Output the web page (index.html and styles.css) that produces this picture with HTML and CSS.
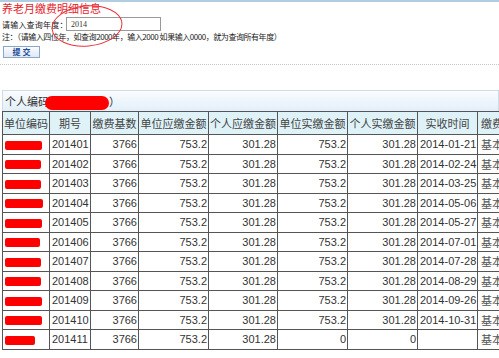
FILE: index.html
```html
<!DOCTYPE html>
<html lang="zh-CN">

<head>
    <meta charset="UTF-8">
    <title>养老月缴费明细信息</title>
    <link rel="stylesheet" href="styles.css">
</head>

<body>
    <div class="page">
        <div class="query">
            <h1 class="title">养老月缴费明细信息</h1>
            <div class="field">
                <label for="year">请输入查询年度：</label>
                <input type="text" id="year" value="2014">
            </div>
            <p class="note">注：（请输入四位年，如查询2000年，输入2000 如果输入0000，就为查询所有年度）</p>
            <button type="button" class="submit">提 交</button>
            <svg class="circle" width="80" height="48" viewBox="0 0 80 48">
                <ellipse cx="37" cy="22" rx="35" ry="20" fill="none" stroke="#e8333a" stroke-width="1" transform="rotate(-5 37 22)"/>
            </svg>
        </div>

        <div class="divider"></div>

        <div class="panel">
            <div class="panel-head">个人编码<span class="blot wide"></span>）</div>
            <table class="detail">
                <colgroup>
                    <col style="width:47px">
                    <col style="width:41px">
                    <col style="width:48px">
                    <col style="width:70px">
                    <col style="width:69px">
                    <col style="width:70px">
                    <col style="width:70px">
                    <col style="width:60px">
                    <col style="width:60px">
                </colgroup>
                <thead>
                    <tr>
                        <th>单位编码</th>
                        <th>期号</th>
                        <th>缴费基数</th>
                        <th>单位应缴金额</th>
                        <th>个人应缴金额</th>
                        <th>单位实缴金额</th>
                        <th>个人实缴金额</th>
                        <th>实收时间</th>
                        <th class="left">缴费类型</th>
                    </tr>
                </thead>
                <tbody id="rows"></tbody>
            </table>
        </div>
    </div>

    <script>
        const dates = ['2014-01-21', '2014-02-24', '2014-03-25', '2014-05-06', '2014-05-27',
            '2014-07-01', '2014-07-28', '2014-08-29', '2014-09-26', '2014-10-31', ''];
        const blots = [37, 36, 36, 38, 37, 35, 36, 36, 37, 37, 30];
        const tbody = document.getElementById('rows');

        dates.forEach((date, i) => {
            const last = i === dates.length - 1;
            const tr = document.createElement('tr');
            tr.innerHTML =
                '<td class="code"><span class="blot" style="width:' + blots[i] + 'px"></span></td>' +
                '<td>2014' + String(i + 1).padStart(2, '0') + '</td>' +
                '<td class="num">3766</td>' +
                '<td class="num">753.2</td>' +
                '<td class="num">301.28</td>' +
                '<td class="num">' + (last ? '0' : '753.2') + '</td>' +
                '<td class="num">' + (last ? '0' : '301.28') + '</td>' +
                '<td>' + date + '</td>' +
                '<td class="type">基本缴费</td>';
            tbody.appendChild(tr);
        });
    </script>
</body>

</html>
```

FILE: styles.css
```css
html,
body {
    margin: 0;
    padding: 0;
    background: #fff;
    overflow: hidden;
}

.page {
    width: 499px;
    height: 358px;
    overflow: hidden;
    border-top: 2px solid #b3cde0;
    box-sizing: border-box;
    font-family: "Noto Sans CJK SC", "Liberation Sans", sans-serif;
    color: #222;
}

.query {
    position: relative;
    padding: 0 2px;
}

.title {
    margin: 0;
    height: 13px;
    font-size: 11px;
    line-height: 13px;
    font-weight: normal;
    color: #e8222a;
}

.field {
    display: flex;
    align-items: center;
    margin-top: 2px;
    height: 14px;
    font-size: 8px;
}

.field label {
    width: 64px;
    white-space: nowrap;
    letter-spacing: 0.2px;
}

.field input {
    width: 95px;
    height: 14px;
    padding: 0 4px;
    margin: 0;
    border: 1px solid #999;
    box-sizing: border-box;
    font-family: "Liberation Serif", serif;
    font-size: 8px;
    color: #333;
}

.note {
    margin: 1px 0 0;
    font-size: 8px;
    line-height: 10px;
    white-space: nowrap;
    letter-spacing: -0.45px;
    color: #222;
}

.submit {
    display: block;
    margin: 4px 0 0 1px;
    width: 37px;
    height: 12px;
    padding: 0;
    font-family: "Noto Sans CJK SC", sans-serif;
    font-size: 8px;
    line-height: 10px;
    font-weight: bold;
    color: #1e4e9a;
    background: linear-gradient(#fafcff, #dfe8f3);
    border: 1px solid #8aa6c8;
}

.circle {
    position: absolute;
    left: 50px;
    top: 2px;
}

.divider {
    margin-top: 6px;
    border-top: 1px dotted #c8c8c8;
}

.panel {
    margin: 25px 0 0 2px;
}

.panel-head {
    height: 20px;
    line-height: 20px;
    padding-left: 2px;
    font-size: 11px;
    color: #333;
    border: 1px solid #cfdbe5;
    border-bottom: none;
    background: linear-gradient(#f9fcfe, #e2eff9);
    white-space: nowrap;
}

.blot {
    display: inline-block;
    width: 36px;
    height: 9px;
    background: #ff0000;
    border-radius: 2px;
    vertical-align: middle;
}

.blot.wide {
    width: 64px;
    height: 14px;
    margin-left: -4px;
    border-radius: 8px;
}

.detail {
    border-collapse: collapse;
    table-layout: fixed;
    width: 535px;
    font-family: "Liberation Sans", sans-serif;
    font-size: 11px;
    color: #333;
}

.detail th,
.detail td {
    border: 1px solid #555;
    padding: 0 1px;
    white-space: nowrap;
    overflow: hidden;
}

.detail th {
    height: 22px;
    font-family: "Noto Sans CJK SC", sans-serif;
    font-size: 11px;
    font-weight: normal;
    color: #444;
    background: #def2f8;
    text-align: center;
}

.detail th.left {
    text-align: left;
    padding-left: 3px;
}

.detail td {
    height: 18.5px;
    line-height: 18px;
    padding-left: 2px;
}

.detail td.num {
    text-align: right;
    padding-right: 1px;
}

.detail td.code {
    padding-left: 2px;
}

.detail td.type {
    padding-left: 3px;
    font-family: "Noto Sans CJK SC", sans-serif;
    font-size: 11px;
    color: #555;
}
```
